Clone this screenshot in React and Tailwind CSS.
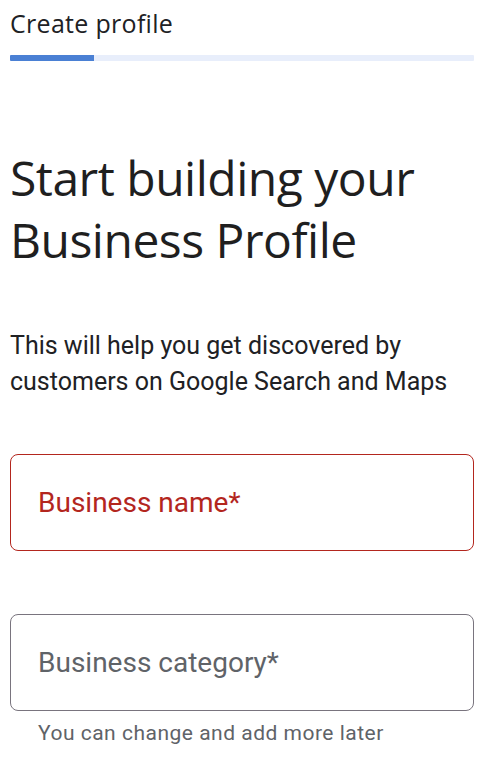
export default function App() {
  return (
    <div className="min-h-[760px] w-[500px] bg-white text-[#202124]" style={{ fontFamily: "Roboto, sans-serif" }}>
      <div className="pl-[10px] pr-[26px] pt-[7px]">
        <h1
          className="text-[25px] leading-[33px] font-normal tracking-[0.3px]"
          style={{ fontFamily: "'Open Sans', sans-serif" }}
        >
          Create profile
        </h1>
        <div className="mt-[15px] flex h-[6px] w-full overflow-hidden rounded-[1px] bg-[#e8eefb]">
          <div className="h-full w-[84px] bg-[#4a80d4]" />
        </div>

        <h2
          className="mt-[86px] text-[48px] leading-[62px] font-normal tracking-[-0.5px] text-[#1f1f1f]"
          style={{ fontFamily: "'Open Sans', sans-serif" }}
        >
          Start building your
          <br />
          Business Profile
        </h2>

        <p className="mt-[57px] text-[25px] leading-[36px] text-[#202124]">
          This will help you get discovered by
          <br />
          customers on Google Search and Maps
        </p>

        <div className="mt-[54px] flex h-[97px] items-center rounded-[8px] border border-[#b3261e] px-[27px]">
          <span className="text-[28px] text-[#b3261e]">Business name*</span>
        </div>

        <div className="mt-[63px] flex h-[97px] items-center rounded-[8px] border border-[#79747e] px-[27px]">
          <span className="text-[28px] text-[#5f6368]">Business category*</span>
        </div>
        <p className="mt-[9px] pl-[28px] text-[21px] leading-[26px] tracking-[0.5px] text-[#5f6368]">
          You can change and add more later
        </p>
      </div>
    </div>
  );
}
